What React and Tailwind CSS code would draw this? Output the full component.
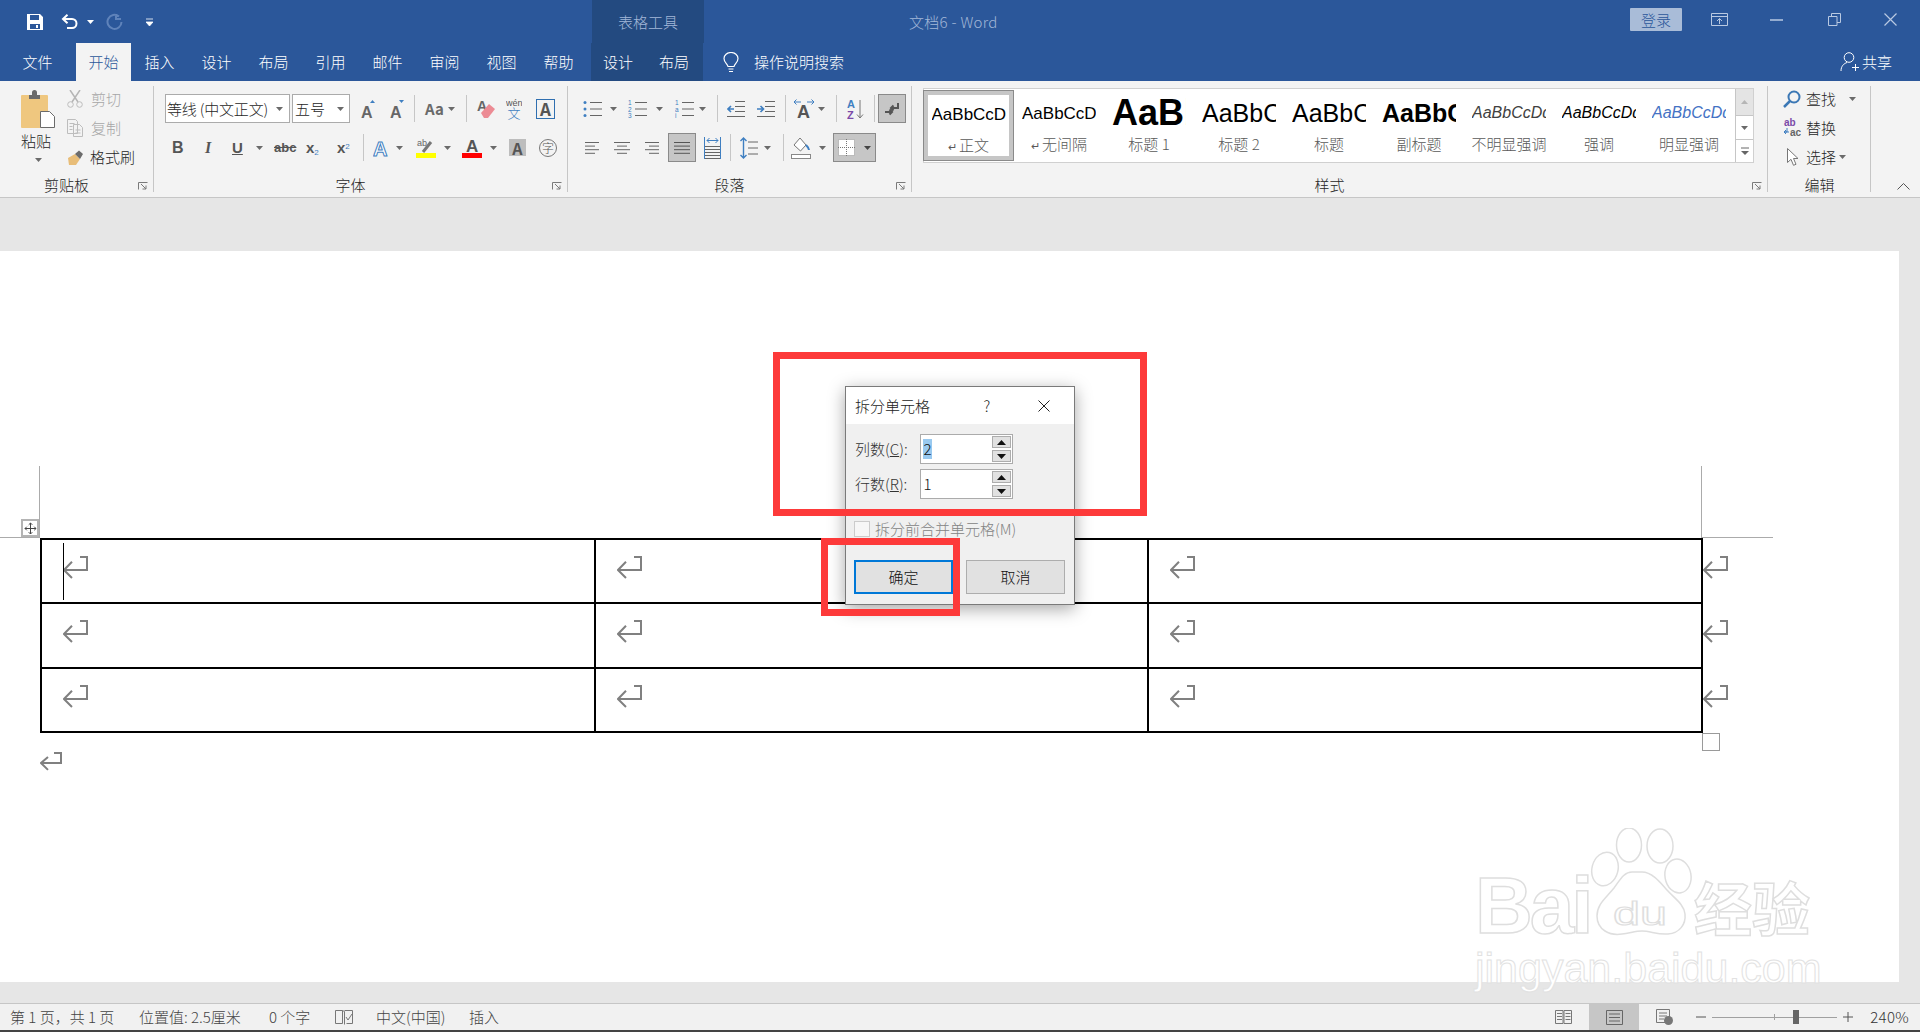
const Ico = ({ w, h, className = "", children }) => (
  <svg width={w} height={h} viewBox={`0 0 ${w} ${h}`} fill="none" className={`shrink-0 ${className}`}>
    {children}
  </svg>
)

const Caret = ({ className = "", fill = "#6a6a6a" }) => (
  <Ico w={7} h={4} className={className}>
    <path d="M0 0h7L3.5 4z" fill={fill} />
  </Ico>
)

const Sep = ({ className = "" }) => <div className={`w-px h-[27px] bg-[#c6c6c6] shrink-0 ${className}`} />

const GlyphA = ({ w = 16, h = 20, size = 18, fill = "#555", stroke, y = 17, x = 0 }) => (
  <text x={x} y={y} fontSize={size} fontWeight="700" fontFamily="Liberation Sans" fill={fill} stroke={stroke} strokeWidth={stroke ? 1 : 0}>
    A
  </text>
)

const Launcher = () => (
  <Ico w={10} h={8}>
    <path d="M.5 7.5v-7h9M3 2l5 5M8 3.5V7H4.5" stroke="#7a7a7a" />
  </Ico>
)

const Lines = ({ w = 14, rows, stroke = "#666" }) => (
  <Ico w={w} h={14}>
    {rows.map(([x1, x2], i) => (
      <path key={i} d={`M${x1} ${1.5 + i * 3.6}H${x2}`} stroke={stroke} />
    ))}
  </Ico>
)

const ReturnMark = ({ w = 25, h = 23, className = "" }) => (
  <Ico w={w} h={h} className={className}>
    <path d={`M${w - 8} 1H${w - 1}V${h - 9}H2M${Math.round(h / 2.6)} ${h / 4}L1 ${h - 9}l${Math.round(h / 2.6) - 1} ${h / 2.9}`} stroke="#808080" strokeWidth="2" />
  </Ico>
)

function TitleBar() {
  return (
    <div className="h-[81px] bg-[#2b579a] flex flex-col shrink-0">
      <div className="h-[43px] flex items-center">
        <Ico w={16} h={16} className="ml-[27px]">
          <path fillRule="evenodd" d="M0 0h13l3 3v13H0zM3 1v5h9V1zM3 10v5h10v-5zM9 11h2v3H9z" fill="#fff" />
        </Ico>
        <Ico w={18} h={15} className="ml-[18px]">
          <path d="M2 5h9a4.5 4.5 0 0 1 0 9H6M6.500 .8 2 5l4.500 4.200" stroke="#fff" strokeWidth="2" />
        </Ico>
        <Caret fill="#fff" className="ml-[8px]" />
        <Ico w={17} h={17} className="ml-[12px]">
          <path d="M13 3.500A7 7 0 1 0 15.500 9M10 1v5h5" stroke="#5f83ba" strokeWidth="2" />
        </Ico>
        <Ico w={7} h={8} className="ml-[23px]">
          <path d="M0 1h7M0 4h7L3.500 8z" stroke="#fff" fill="#fff" strokeWidth=".8" />
        </Ico>
        <div className="ml-[439px] w-[112px] h-full bg-[#234a80] flex items-center justify-center text-[#a3b8d8]">表格工具</div>
        <div className="ml-[205px] text-[#a3b8d8] tracking-[0.3px]">文档6 - Word</div>
        <div className="ml-auto w-[52px] h-[23px] mb-[4px] bg-[#a9bcd8] rounded-[1px] text-[#2b579a] leading-[24px] text-center">登录</div>
        <Ico w={17} h={13} className="ml-[29px] mb-[4px]">
          <path d="M.5.500h16v12H.500zM.5 3.500h16M8.500 11V5.500M6 8l2.500-2.500L11 8" stroke="#b9c9e2" />
        </Ico>
        <Ico w={13} h={2} className="ml-[42px] mb-[4px]">
          <path d="M0 1h13" stroke="#b9c9e2" strokeWidth="1.500" />
        </Ico>
        <Ico w={13} h={13} className="ml-[45px] mb-[4px]">
          <path d="M.5 3.500h8.500v9H.500zM3.500 3.500v-3H12.500v9H9" stroke="#b9c9e2" />
        </Ico>
        <Ico w={13} h={13} className="ml-[43px] mr-[23px] mb-[4px]">
          <path d="M.5.500l12 12M12.500.500l-12 12" stroke="#b9c9e2" strokeWidth="1.200" />
        </Ico>
      </div>
      <div className="h-[38px] flex items-stretch text-white">
        <div className="ml-[9px] w-[57px] flex items-center justify-center">文件</div>
        <div className="ml-[10px] w-[55px] bg-[#f3f3f3] text-[#2b579a] flex items-center justify-center">开始</div>
        {["插入", "设计", "布局", "引用", "邮件", "审阅", "视图", "帮助"].map((t) => (
          <div key={t} className="w-[57px] flex items-center justify-center">{t}</div>
        ))}
        <div className="ml-[4px] w-[112px] bg-[#234a80] flex">
          <div className="w-[54px] flex items-center justify-center">设计</div>
          <div className="w-[58px] flex items-center justify-center">布局</div>
        </div>
        <Ico w={16} h={21} className="ml-[20px] self-center">
          <path d="M5 14.500C4.500 12 1 10.500 1 6.500a7 6 0 0 1 14 0c0 4-3.500 5.500-4 8zM5.500 17h5M6 19.500h4" stroke="#fff" strokeWidth="1.200" />
        </Ico>
        <div className="ml-[15px] flex items-center">操作说明搜索</div>
        <Ico w={19} h={20} className="ml-auto self-center">
          <circle cx="9" cy="5.500" r="4.800" stroke="#fff" />
          <path d="M1 19c0-5 3-7.500 6-8.500M12 15.500h7M15.500 12v7" stroke="#fff" />
        </Ico>
        <div className="ml-[3px] mr-[28px] flex items-center">共享</div>
      </div>
    </div>
  )
}

function Group({ w, label, launcher = true, children }) {
  return (
    <div className={`${w} h-[106px] shrink-0 border-r border-[#c6c6c6] flex flex-col`}>
      <div className="flex-1 min-h-0">{children}</div>
      <div className="h-[14px] flex items-center text-[#262626]">
        <div className={`flex-1 text-center leading-[16px] ${launcher ? "" : "pl-[1px]"}`}>{label}</div>
        {launcher && (
          <div className="w-[20px] flex justify-center mt-[2px]">
            <Launcher />
          </div>
        )}
      </div>
    </div>
  )
}

function Clipboard() {
  return (
    <div className="flex pl-[21px]">
      <div className="w-[46px] flex flex-col items-start">
        <Ico w={34} h={38} className="mt-[4px]">
          <rect x="0" y="5" width="27" height="33" rx="1" fill="#efc77f" />
          <path d="M8 5h3V2.500a2.500 2.500 0 0 1 5 0V5h3v4H8z" fill="#6b6b6b" />
          <path d="M19.500 21.500h9l5 5v11h-14z" fill="#fff" stroke="#6b6b6b" />
        </Ico>
        <div className="mt-[3px] w-[30px] text-center text-[#262626]">粘贴</div>
        <Caret className="ml-[14px] mt-[7px]" />
      </div>
      <div className="flex flex-col gap-[3px]">
        <div className="h-[26px] flex items-center text-[#a6a6a6]">
          <Ico w={16} h={18}>
            <path d="M3 0l8 12M13 0L5 12" stroke="#b5b5b5" strokeWidth="1.500" />
            <circle cx="3.500" cy="14.500" r="2.800" stroke="#bdbdbd" />
            <circle cx="12.500" cy="14.500" r="2.800" stroke="#bdbdbd" />
          </Ico>
          <span className="ml-[8px]">剪切</span>
        </div>
        <div className="h-[26px] flex items-center text-[#a6a6a6]">
          <Ico w={16} h={18}>
            <path d="M.5.500h8l2 2v12H.500zM6.500 5.500h6l3 3v9h-9zM2.500 4.500h5M2.500 7.500h3M2.500 10.500h3M8.500 11h5M8.500 14h5" stroke="#bdbdbd" />
          </Ico>
          <span className="ml-[8px]">复制</span>
        </div>
        <div className="h-[26px] flex items-center text-[#262626]">
          <Ico w={16} h={15} className="ml-[1px]">
            <path d="M1 15l-1-7 7-4 5 5-4 6z" fill="#e8bd78" />
            <path d="M7 4l4-3.500 4 3.500-3 5z" fill="#6b6b6b" />
          </Ico>
          <span className="ml-[6px]">格式刷</span>
        </div>
      </div>
    </div>
  )
}

function FontGroup() {
  return (
    <div>
      <div className="mt-[8px] h-[29px] flex items-center">
        <div className="ml-[11px] w-[125px] h-[29px] bg-white border border-[#ababab] flex items-center pl-[1px] text-[#262626] tracking-[-0.2px] whitespace-nowrap">
          等线 (中文正文)
          <Caret className="ml-auto mr-[6px]" />
        </div>
        <div className="ml-[2px] w-[58px] h-[29px] bg-white border border-[#ababab] flex items-center pl-[2px] text-[#262626]">
          五号
          <Caret className="ml-auto mr-[5px]" />
        </div>
        <Ico w={14} h={20} className="ml-[11px]">
          <GlyphA size={16} y={19} fill="#666" />
          <path d="M9 4l2.500-3L14 4z" fill="#3f7fc1" />
        </Ico>
        <Ico w={15} h={20} className="ml-[15px]">
          <GlyphA size={16} y={19} fill="#666" />
          <path d="M9 1l2.500 3L14 1z" fill="#3f7fc1" />
        </Ico>
        <Sep className="ml-[9px]" />
        <span className="ml-[10px] w-[17px] text-[15px] font-bold text-[#6a6a6a] leading-none whitespace-nowrap">Aa</span>
        <Caret className="ml-[6px]" />
        <Sep className="ml-[11px]" />
        <Ico w={18} h={22} className="ml-[10px]">
          <GlyphA size={14} y={13} fill="#666" />
          <path d="M4 15l8-9 6 5-7 9H7z" fill="#ec8b94" />
        </Ico>
        <Ico w={16} h={22} className="ml-[11px]">
          <text x="0" y="8" fontSize="9" fontFamily="Liberation Sans" fill="#555">wén</text>
          <text x="1.500" y="20" fontSize="13" fontFamily="Noto Sans CJK SC" fill="#3f7fc1">文</text>
        </Ico>
        <div className="ml-[14px] w-[19px] h-[20px] border border-[#2f6fb0] flex items-center justify-center text-[17px] leading-none font-bold text-[#555]">A</div>
      </div>
      <div className="mt-[10px] h-[29px] flex items-center text-[#555]">
        <span className="ml-[18px] w-[10px] font-bold text-[16px] leading-none font-['Liberation_Sans']">B</span>
        <span className="ml-[23px] w-[7px] font-bold italic text-[16px] leading-none font-['Liberation_Serif']">I</span>
        <span className="ml-[20px] w-[11px] font-bold underline text-[15px] leading-none font-['Liberation_Sans']">U</span>
        <Caret className="ml-[13px]" />
        <span className="ml-[11px] w-[20px] font-bold line-through text-[13px] leading-none font-['Liberation_Sans']">abc</span>
        <span className="ml-[12px] w-[16px] font-bold text-[15px] leading-none font-['Liberation_Sans'] whitespace-nowrap">
          x<sub className="text-[8px] text-[#3f7fc1] font-normal">2</sub>
        </span>
        <span className="ml-[15px] w-[14px] font-bold text-[15px] leading-none font-['Liberation_Sans'] whitespace-nowrap">
          x<sup className="text-[8px] text-[#3f7fc1] font-normal">2</sup>
        </span>
        <Sep className="ml-[12px]" />
        <Ico w={16} h={20} className="ml-[9px]">
          <GlyphA size={20} y={18} fill="#fff" stroke="#3f7fc1" />
        </Ico>
        <Caret className="ml-[7px]" />
        <Ico w={20} h={20} className="ml-[13px]">
          <text x="1" y="8" fontSize="9" fontFamily="Liberation Sans" fill="#666">ab</text>
          <path d="M7 14l8-10" stroke="#777" strokeWidth="3" />
          <rect y="15" width="20" height="5" fill="#ffff00" />
        </Ico>
        <Caret className="ml-[8px]" />
        <Ico w={20} h={20} className="ml-[11px]">
          <GlyphA size={17} x={4} y={14} fill="#555" />
          <rect y="15" width="20" height="5" fill="#ff0000" />
        </Ico>
        <Caret className="ml-[8px]" />
        <div className="ml-[12px] w-[17px] h-[17px] bg-[#bdbdbd] flex items-center justify-center text-[16px] leading-none font-bold">A</div>
        <div className="ml-[13px] w-[18px] h-[18px] border border-[#777] rounded-full flex items-center justify-center text-[12px] leading-none">字</div>
      </div>
    </div>
  )
}

const Btn = ({ w, className = "", children }) => (
  <div className={`${w} h-[29px] shrink-0 bg-[#c6c6c6] border border-[#8a8a8a] flex items-center justify-center ${className}`}>
    {children}
  </div>
)

const ListIcon = ({ marks }) => (
  <Ico w={19} h={18}>
    {marks.map((m, i) => (
      <g key={i}>
        {m === "." ? (
          <circle cx="2" cy={2.500 + i * 6.500} r="1.500" fill="#3f7fc1" />
        ) : (
          <text x="0" y={5 + i * 6.500} fontSize="6.500" fontFamily="Liberation Sans" fill="#3f7fc1">{m}</text>
        )}
        <path d={`M7 ${2.500 + i * 6.500}H19`} stroke="#666" />
      </g>
    ))}
  </Ico>
)

const IndentIcon = ({ flip }) => (
  <Ico w={18} h={16}>
    <path d="M8 .5h10M8 5.500h10M8 10.500h10M0 15.500h18" stroke="#666" />
    <path d={flip ? "M0 8h6M3.500 5L6.500 8l-3 3" : "M7 8H1M4 5L1 8l3 3"} stroke="#3f7fc1" strokeWidth="1.600" />
  </Ico>
)

function ParagraphGroup() {
  return (
    <div>
      <div className="mt-[8px] h-[29px] flex items-center">
        <div className="ml-[15px]"><ListIcon marks={[".", ".", "."]} /></div>
        <Caret className="ml-[8px]" />
        <div className="ml-[11px]"><ListIcon marks={["1", "2", "3"]} /></div>
        <Caret className="ml-[9px]" />
        <div className="ml-[12px] w-[18px]"><ListIcon marks={["1", "a", "i"]} /></div>
        <Caret className="ml-[6px]" />
        <Sep className="ml-[11px]" />
        <div className="ml-[9px]"><IndentIcon /></div>
        <div className="ml-[12px]"><IndentIcon flip /></div>
        <Sep className="ml-[10px]" />
        <Ico w={20} h={20} className="ml-[8px]">
          <path d="M0 3h7M2.500 .5L0 3l2.500 2.500M13 3h7M17.500 .5L20 3l-2.500 2.500" stroke="#3f7fc1" />
          <GlyphA size={18} x={3} y={19} fill="#555" />
        </Ico>
        <Caret className="ml-[4px]" />
        <Sep className="ml-[11px]" />
        <Ico w={17} h={22} className="ml-[10px]">
          <text x="0" y="10" fontSize="11" fontWeight="700" fontFamily="Liberation Sans" fill="#3f7fc1">A</text>
          <text x="0" y="21" fontSize="11" fontWeight="700" fontFamily="Liberation Sans" fill="#7b4aa8">Z</text>
          <path d="M13 2v18M10 16.500l3 3.500 3-3.500" stroke="#777" />
        </Ico>
        <Sep className="ml-[10px]" />
        <Btn w="w-[28px]" className="ml-[3px]">
          <Ico w={16} h={14}>
            <path d="M14 1v5H7M9.500 3.500L7 6l2.500 2.500M1 10h7M5.500 7.500L8 10l-2.500 2.500" stroke="#555" strokeWidth="2" />
          </Ico>
        </Btn>
      </div>
      <div className="mt-[10px] h-[29px] flex items-center">
        <div className="ml-[17px]"><Lines rows={[[0, 14], [0, 10], [0, 14], [0, 10]]} /></div>
        <div className="ml-[15px] w-[16px]"><Lines w={16} rows={[[0, 16], [3, 13], [0, 16], [3, 13]]} /></div>
        <div className="ml-[15px]"><Lines rows={[[0, 14], [4, 14], [0, 14], [4, 14]]} /></div>
        <Btn w="w-[28px]" className="ml-[9px]">
          <Lines w={16} stroke="#555" rows={[[0, 16], [0, 16], [0, 16], [0, 16]]} />
        </Btn>
        <Ico w={17} h={22} className="ml-[8px]">
          <path d="M.5 0v22M16.500 0v22" stroke="#3f7fc1" />
          <path d="M3 3.500h11M5.500 1L3 3.500 5.500 6M11.500 1L14 3.500 11.500 6" stroke="#3f7fc1" />
          <path d="M1 9.500h15M1 12.500h15M1 15.500h15M1 18.500h15M1 21.500h15" stroke="#666" />
        </Ico>
        <Sep className="ml-[9px]" />
        <Ico w={18} h={22} className="ml-[9px]">
          <path d="M3.500 1v20M.5 4L3.500 1l3 3M.5 18l3 3 3-3" stroke="#3f7fc1" strokeWidth="1.400" />
          <path d="M8 5h10M8 11h10M8 17h10" stroke="#666" />
        </Ico>
        <Caret className="ml-[6px]" />
        <Sep className="ml-[12px]" />
        <Ico w={20} h={22} className="ml-[7px]">
          <path d="M9 1l6 7-5.500 6L3 8z" fill="#fff" stroke="#777" />
          <path d="M15 8c2 2 3 3 3 5" stroke="#3f7fc1" strokeWidth="2" />
          <rect x=".5" y="17.500" width="19" height="4" fill="#fff" stroke="#888" />
        </Ico>
        <Caret className="ml-[8px]" />
        <Btn w="w-[43px]" className="ml-[7px] gap-[9px]">
          <Ico w={17} h={17} className="bg-white">
            <path d="M.5.500h16v16H.500zM8.500 0v17M0 8.500h17" stroke="#777" strokeDasharray="1 1" />
          </Ico>
          <Caret fill="#444" />
        </Btn>
      </div>
    </div>
  )
}

const styles = [
  { label: "无间隔", mark: true, sample: "text-[17px] text-black" },
  { label: "标题 1", sample: "text-[36px] font-bold text-black" },
  { label: "标题 2", sample: "text-[25px] text-black" },
  { label: "标题", sample: "text-[25px] text-black" },
  { label: "副标题", sample: "text-[25px] font-bold text-black" },
  { label: "不明显强调", text: "AaBbCcDd", sample: "text-[16px] italic text-[#404040]" },
  { label: "强调", sample: "text-[16px] italic text-black" },
  { label: "明显强调", sample: "text-[16px] italic text-[#4472c4]" },
]

const StyleItem = ({ label, mark, sample }) => (
  <>
    <div className="h-[36px] w-[74px] overflow-hidden flex items-center whitespace-nowrap leading-none font-['Liberation_Sans']">
      <span className={sample}>AaBbCcDd</span>
    </div>
    <div className="mt-[3px] text-[#595959] leading-[20px] whitespace-nowrap">
      {mark && <span className="text-[11px] mr-[2px]">↵</span>}
      {label}
    </div>
  </>
)

const scrollBtn = "w-[18px] border-l border-[#c6c6c6] flex items-center justify-center"

function Gallery() {
  return (
    <div className="ml-[11px] mt-[2px] w-[831px] h-[75px] bg-white border border-[#d0d0d0] flex">
      <div className="w-[91px] -ml-px my-px shrink-0 border border-[#8a8a8a] bg-white outline-none">
        <div className="h-full border-[4px] border-[#c6c6c6] flex flex-col items-center pt-[1px]">
          <StyleItem label="正文" mark sample="text-[17px] text-black" />
        </div>
      </div>
      {styles.map((s) => (
        <div key={s.label} className="w-[90px] shrink-0 flex flex-col items-center pt-[6px]">
          <StyleItem {...s} />
        </div>
      ))}
      <div className="ml-auto flex flex-col">
        <div className={`${scrollBtn} h-[26px] bg-[#e4e4e4]`}>
          <Ico w={7} h={4}><path d="M0 4h7L3.500 0z" fill="#b5b5b5" /></Ico>
        </div>
        <div className={`${scrollBtn} h-[24px] border-t`}><Caret /></div>
        <div className={`${scrollBtn} h-[23px] border-t`}>
          <Ico w={8} h={8}><path d="M0 1h8" stroke="#666" /><path d="M0 4h8L4 8z" fill="#666" /></Ico>
        </div>
      </div>
    </div>
  )
}

function EditGroup() {
  const row = "h-[26px] pl-[15px] flex items-center text-[#262626]"
  return (
    <div className="flex flex-col gap-[3px]">
      <div className={row}>
        <Ico w={18} h={18}>
          <circle cx="11" cy="7" r="5.500" stroke="#3c78b5" strokeWidth="2" />
          <path d="M7 11l-6 6" stroke="#3c78b5" strokeWidth="2.500" />
        </Ico>
        <span className="ml-[5px]">查找</span>
        <Caret className="ml-[13px]" />
      </div>
      <div className={row}>
        <Ico w={18} h={20}>
          <text x="1" y="8" fontSize="10" fontWeight="700" fontFamily="Liberation Sans" fill="#7b4aa8">ab</text>
          <text x="7" y="18" fontSize="10" fontWeight="700" fontFamily="Liberation Sans" fill="#666">ac</text>
          <path d="M4 10v4H1M6 14H1.500M3 12l-2 2 2 2" stroke="#3f7fc1" />
        </Ico>
        <span className="ml-[5px]">替换</span>
      </div>
      <div className={row}>
        <Ico w={11} h={18} className="ml-[4px]">
          <path d="M.5.500v14l3.500-3.200 2.500 6 2.500-1-2.500-5.800H11z" stroke="#777" fill="#fff" />
        </Ico>
        <span className="ml-[8px]">选择</span>
        <Caret className="ml-[3px]" />
      </div>
    </div>
  )
}

function Ribbon() {
  return (
    <div className="h-[117px] shrink-0 bg-[#f3f3f3] border-b border-[#c6c6c6] pt-[5px] flex">
      <Group w="w-[154px]" label="剪贴板"><Clipboard /></Group>
      <Group w="w-[414px]" label="字体"><FontGroup /></Group>
      <Group w="w-[344px]" label="段落"><ParagraphGroup /></Group>
      <Group w="w-[856px]" label="样式"><Gallery /></Group>
      <Group w="w-[103px]" label="编辑" launcher={false}><EditGroup /></Group>
      <div className="flex-1 flex items-end justify-end pr-[10px] pb-[2px] h-[106px]">
        <Ico w={13} h={8}><path d="M.5 7.500l6-6 6 6" stroke="#555" /></Ico>
      </div>
    </div>
  )
}

const SpinBtn = ({ d }) => (
  <div className="w-[19px] h-[12px] bg-[#e1e1e1] border border-[#adadad] flex items-center justify-center">
    <Ico w={9} h={5}><path d={d} fill="#111" /></Ico>
  </div>
)

const Spinner = ({ label, hot, value, className = "" }) => (
  <div className={`flex items-center pl-[9px] ${className}`}>
    <div className="w-[65px] text-[#333] whitespace-nowrap">
      {label}(<u>{hot}</u>):
    </div>
    <div className="w-[93px] h-[30px] bg-white border border-[#ababab] flex items-center pl-[2px] pr-[1px]">
      {value === "2" ? (
        <span className="w-[9px] h-[20px] bg-[#99c9ef] text-center leading-[20px] text-[#111]">2</span>
      ) : (
        <span className="w-[9px] text-center text-[#111]">{value}</span>
      )}
      <div className="ml-auto flex flex-col gap-[2px]">
        <SpinBtn d="M0 5L4.500 0 9 5z" />
        <SpinBtn d="M0 0l4.500 5L9 0z" />
      </div>
    </div>
  </div>
)

function Dialog() {
  return (
    <div className="absolute left-[845px] top-[135px] w-[230px] h-[219px] bg-[#f0f0f0] border border-[#7a7a7a] shadow-[0_4px_16px_rgba(0,0,0,0.35)] flex flex-col">
      <div className="h-[37px] bg-white flex items-center pl-[9px] text-[#222] shrink-0">
        <span className="w-[75px] whitespace-nowrap">拆分单元格</span>
        <span className="ml-[53px] w-[8px] text-center">?</span>
        <Ico w={12} h={12} className="ml-[47px]">
          <path d="M.5.500l11 11M11.500.500l-11 11" stroke="#222" />
        </Ico>
      </div>
      <Spinner label="列数" hot="C" value="2" className="mt-[10px]" />
      <Spinner label="行数" hot="R" value="1" className="mt-[5px]" />
      <div className="mt-[22px] ml-[8px] h-[16px] flex items-center text-[#838383]">
        <div className="w-[16px] h-[16px] bg-[#f7f7f7] border border-[#cccccc] shrink-0" />
        <span className="ml-[5px] whitespace-nowrap">拆分前合并单元格(M)</span>
      </div>
      <div className="mt-[23px] ml-[8px] flex gap-[13px] text-[#111]">
        <div className="w-[99px] h-[34px] bg-[#e1e1e1] border-2 border-[#0078d7] flex items-center justify-center">确定</div>
        <div className="w-[99px] h-[34px] bg-[#e1e1e1] border border-[#adadad] flex items-center justify-center">取消</div>
      </div>
    </div>
  )
}

const rowHeights = ["h-[64px]", "h-[65px]", "h-[64px]"]
const colWidths = ["w-[554px]", "w-[553px]", "w-[554px]"]

function DocTable() {
  return (
    <div className="relative ml-[40px] w-[1663px] border-l-2 border-t-2 border-black">
      {rowHeights.map((h, r) => (
        <div key={h + r} className={`flex ${h}`}>
          {colWidths.map((w, c) => (
            <div key={c} className={`${w} shrink-0 border-r-2 border-b-2 border-black pl-[21px] pt-[16px] relative`}>
              {r === 0 && c === 0 && <div className="absolute left-[21px] top-[3px] w-px h-[57px] bg-black" />}
              <ReturnMark />
            </div>
          ))}
          <div className="pt-[16px] shrink-0"><ReturnMark /></div>
        </div>
      ))}
      <div className="absolute left-[-21px] top-[-21px] w-[18px] h-[18px] bg-white border-2 border-[#b4b4b4] flex items-center justify-center">
        <Ico w={13} h={13}>
          <path d="M6.500 1v11M1 6.500h11M4.700 2.800L6.500 1l1.800 1.800M4.700 10.200l1.800 1.800 1.800-1.800M2.800 4.700L1 6.500l1.800 1.800M10.200 4.700L12 6.500l-1.800 1.800" stroke="#444" />
        </Ico>
      </div>
      <div className="absolute left-[1660px] top-[193px] w-[18px] h-[18px] bg-white border border-[#9a9a9a]" />
    </div>
  )
}

const stroke = "[-webkit-text-stroke:1.5px_#dedede] text-white"

function Watermark() {
  return (
    <div className="absolute left-[1475px] top-[577px] flex flex-col pointer-events-none">
      <div className="flex items-end h-[110px]">
        <div className={`w-[115px] text-[80px] leading-[64px] font-bold tracking-[-3px] font-['Liberation_Sans'] ${stroke}`}>Bai</div>
        <Ico w={104} h={110}>
          <g stroke="#dedede" strokeWidth="1.500" fill="#fff">
            <ellipse cx="15" cy="41" rx="13" ry="17" transform="rotate(15 15 41)" />
            <ellipse cx="39" cy="17" rx="12.500" ry="17" />
            <ellipse cx="70" cy="18" rx="13" ry="17" />
            <ellipse cx="88" cy="48" rx="13" ry="17" transform="rotate(-10 88 48)" />
            <path d="M42 44C34 44 30 52 24 60 16 70 7 76 7 88 7 102 20 108 32 106 40 105 46 103 52 103 60 103 68 107 78 106 90 105 96 96 95 86 94 76 84 70 77 62 70 54 62 44 52 44Z" />
            <text x="23" y="97" fontSize="34" textLength="54" lengthAdjust="spacingAndGlyphs" fontFamily="Liberation Sans" strokeWidth="1.200">du</text>
          </g>
        </Ico>
        <div className={`w-[118px] text-[58px] leading-[64px] font-bold whitespace-nowrap ${stroke}`}>经验</div>
      </div>
      <div className="mt-[6px] text-[43px] leading-[48px] font-['Liberation_Sans'] whitespace-nowrap [-webkit-text-stroke:1px_#e2e2e2] text-white">
        jingyan.baidu.com
      </div>
    </div>
  )
}

function Page() {
  return (
    <div className="relative w-[1899px] h-[731px] bg-white pt-[287px] shrink-0">
      <div className="absolute left-0 top-[215px] w-[40px] h-[72px] border-r border-b border-[#ababab]" />
      <div className="absolute left-[1701px] top-[215px] w-[72px] h-[72px] border-l border-b border-[#ababab]" />
      <DocTable />
      <ReturnMark w={22} h={20} className="ml-[40px] mt-[19px]" />
      <Watermark />
      <Dialog />
      <div className="absolute left-[773px] top-[101px] w-[374px] h-[164px] border-[7px] border-[#fd3a3a]" />
      <div className="absolute left-[821px] top-[287px] w-[139px] h-[78px] border-[7px] border-[#fd3a3a]" />
    </div>
  )
}

function StatusBar() {
  return (
    <div className="h-[27px] shrink-0 bg-[#f1f1f1] border-t border-[#c6c6c6] flex items-center text-[#444] whitespace-nowrap">
      <span className="ml-[10px] w-[129px]">第 1 页，共 1 页</span>
      <span className="w-[130px]">位置值: 2.5厘米</span>
      <span className="w-[66px]">0 个字</span>
      <Ico w={18} h={16}>
        <path d="M.5 1.500h7v13h-7zM7.500 1.500l2 1v13M9.500 1.500h8v13h-6M11 8l2 3 4-6" stroke="#777" />
      </Ico>
      <span className="ml-[23px] w-[93px]">中文(中国)</span>
      <span>插入</span>
      <Ico w={17} h={15} className="ml-auto">
        <path d="M.5.500h7.500v13H.500zM9 .5h7.500v13H9zM2 3.500h5M2 6.500h5M2 9.500h5M10.500 3.500h5M10.500 6.500h5M10.500 9.500h5" stroke="#777" />
      </Ico>
      <div className="ml-[17px] w-[50px] h-full bg-[#c6c6c6] flex items-center justify-center">
        <Ico w={17} h={15}>
          <path d="M.5.500h16v14H.500zM3 4h11M3 7.500h11M3 11h11" stroke="#666" />
        </Ico>
      </div>
      <Ico w={17} h={16} className="ml-[17px]">
        <path d="M.5.500h13v13H.500zM3 4h8M3 7h8M3 10h5" stroke="#777" />
        <circle cx="12.500" cy="11.500" r="4.500" fill="#777" />
      </Ico>
      <Ico w={10} h={2} className="ml-[23px]"><path d="M0 1h10" stroke="#555" /></Ico>
      <div className="ml-[6px] w-[125px] h-[14px] flex items-center relative">
        <div className="w-full h-px bg-[#a0a0a0]" />
        <div className="absolute left-[62px] top-[4px] w-px h-[6px] bg-[#a0a0a0]" />
        <div className="absolute left-[81px] top-0 w-[6px] h-[14px] bg-[#666]" />
      </div>
      <Ico w={10} h={10} className="ml-[6px]"><path d="M0 5h10M5 0v10" stroke="#555" /></Ico>
      <span className="ml-[17px] mr-[11px] text-[#333] tracking-[0.3px]">240%</span>
    </div>
  )
}

export default function App() {
  return (
    <div className="w-[1920px] h-[1032px] overflow-hidden flex flex-col bg-[#e6e6e6] text-[15px] leading-[20px] font-light font-['Noto_Sans_CJK_SC','Liberation_Sans',sans-serif]">
      <TitleBar />
      <Ribbon />
      <div className="h-[53px] shrink-0" />
      <Page />
      <div className="h-[21px] shrink-0" />
      <StatusBar />
      <div className="h-[2px] bg-[#444] shrink-0" />
    </div>
  )
}
